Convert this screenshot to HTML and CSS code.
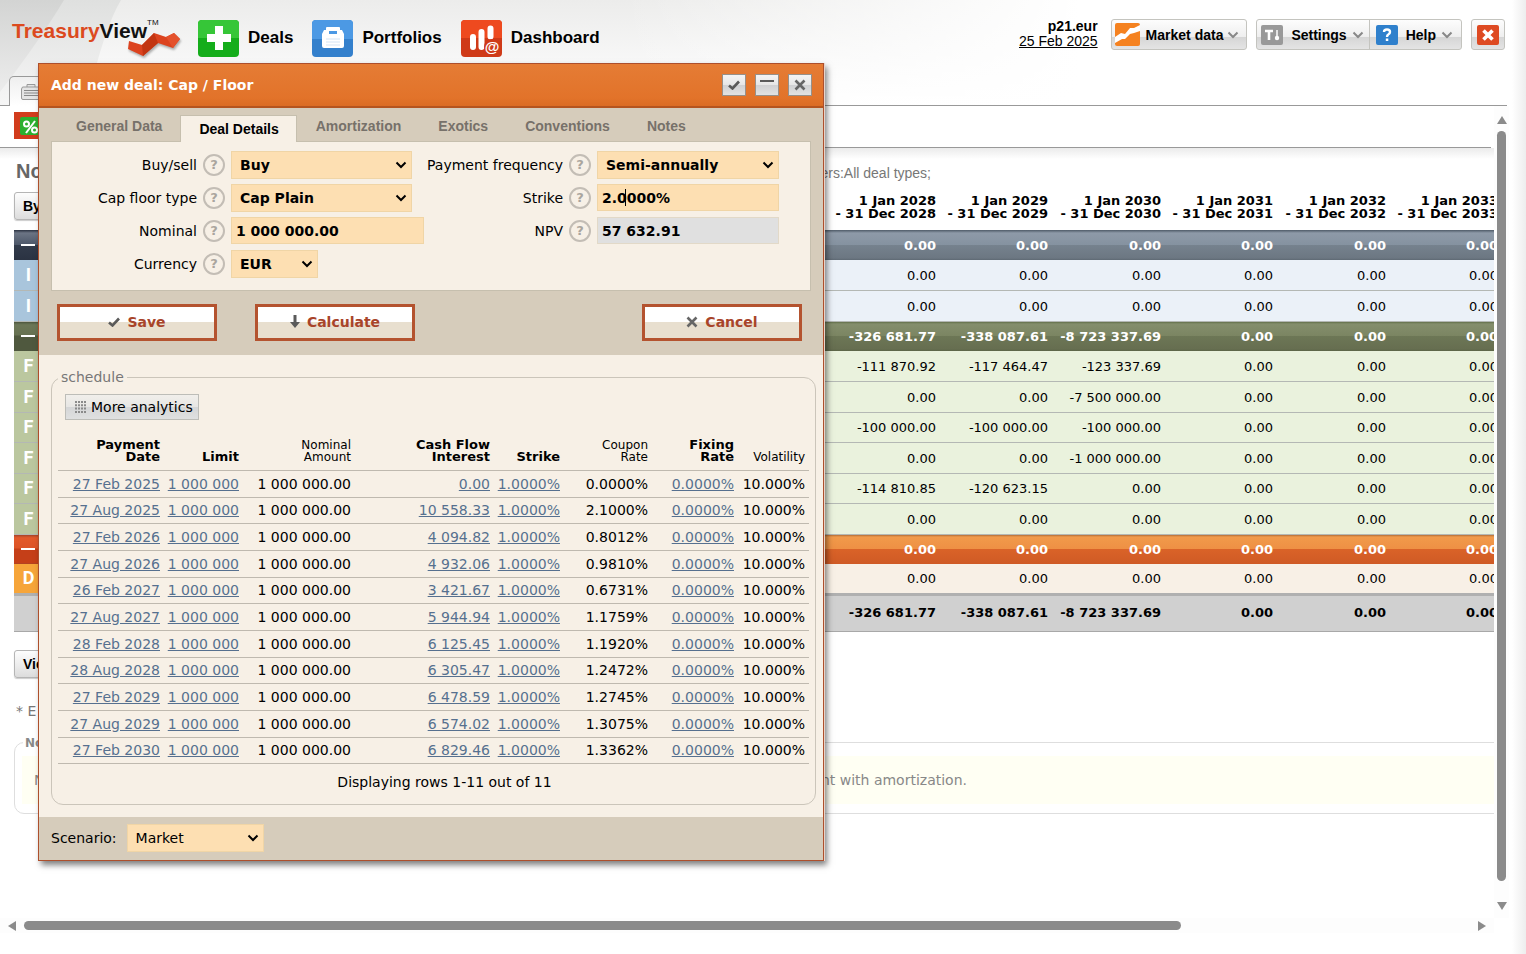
FILE: index.html
```html
<!DOCTYPE html>
<html lang="en">
<head>
<meta charset="utf-8">
<title>TreasuryView</title>
<link rel="stylesheet" href="styles.css">
</head>
<body>
<svg class="defs" aria-hidden="true">
  <symbol id="chev" viewBox="0 0 12 8"><path d="M1.5 1.5 6 6l4.500-4.500" fill="none" stroke="currentColor" stroke-width="2"/></symbol>
  <symbol id="check" viewBox="0 0 12 10"><path d="M1 5.500 4.500 8.500 11 1.500" fill="none" stroke="#5a5a5a" stroke-width="2.600"/></symbol>
  <symbol id="cross" viewBox="0 0 12 12"><path d="M1.500 1.500 10.500 10.500M10.500 1.500 1.500 10.500" fill="none" stroke="#666" stroke-width="2.600"/></symbol>
</svg>

<header class="top">
  <svg class="top-art" width="320" height="106" aria-hidden="true">
    <defs>
      <linearGradient id="ga" x1="0" y1="0" x2="0" y2="1"><stop offset="0" stop-color="#d3d4d3"/><stop offset="1" stop-color="#ececec"/></linearGradient>
      <linearGradient id="gb" x1="0" y1="0" x2="0" y2="1"><stop offset="0" stop-color="#dfe0df"/><stop offset="1" stop-color="#f6f6f6"/></linearGradient>
    </defs>
    <path d="M0 0H121Q104 28 86 106H0Z" fill="url(#gb)"/>
    <path d="M0 0H64Q40 40 0 92Z" fill="url(#ga)"/>
  </svg>
  <a class="logo" href="#"><span class="logo-text"><span class="logo-red">Treasury</span>View</span><span class="logo-tm">TM</span>
    <svg class="logo-mark" width="54" height="26" viewBox="0 0 54 26" aria-hidden="true"><path d="M2 9 15 13 27 1 39 5 47 1 53 7 46 16 31 11 16 24 1 17Z" fill="#dc431f"/><path d="M15 13 27 1 31 11 16 24Z" fill="#c23512"/><path d="M39 5 47 1 53 7 46 16Z" fill="#e4512c"/></svg>
  </a>
  <nav class="main-nav">
    <a href="#"><svg width="41" height="37" viewBox="0 0 41 37"><rect width="41" height="37" rx="4" fill="#15ad1b"/><path d="M4 0H37a4 4 0 0 1 4 4V18H0V4A4 4 0 0 1 4 0Z" fill="#36c638"/><path d="M17 6h8v8h8v8h-8v8h-8v-8H9v-8h8Z" fill="#fff"/></svg>Deals</a>
    <a href="#"><svg width="41" height="37" viewBox="0 0 41 37"><rect width="41" height="37" rx="4" fill="#3480cc"/><path d="M4 0H37a4 4 0 0 1 4 4V19H0V4A4 4 0 0 1 4 0Z" fill="#4c99e4"/><path d="M14 10V8q0-1 1-1h12q1 0 1 1v2h2l2 4v12q0 2-2 2H12q-2 0-2-2V14l2-4Z" fill="#fff"/><path d="M17 11h8v3h-8Z" fill="#4c99e4"/><path d="M14 19h14M14 22h14M14 25h14" stroke="#d5e4f4"/></svg>Portfolios</a>
    <a href="#"><svg width="41" height="37" viewBox="0 0 41 37"><rect width="41" height="37" rx="4" fill="#cf3a18"/><path d="M4 0H37a4 4 0 0 1 4 4V18H0V4A4 4 0 0 1 4 0Z" fill="#ee4a1f"/><path d="M12 17v10M20.500 12v15M29.500 8.500v8" stroke="#fff" stroke-width="6" stroke-linecap="round"/><circle cx="31" cy="27" r="8" fill="#cf3a18"/><text x="31" y="32" class="at-sign" text-anchor="middle">@</text></svg>Dashboard</a>
  </nav>
  <div class="account"><strong>p21.eur</strong><a href="#">25 Feb 2025</a></div>
  <div class="tools">
    <div class="tool-group">
      <button type="button" class="tool tool-market"><svg width="25" height="23" viewBox="0 0 25 23"><rect width="25" height="23" rx="2" fill="#f58220"/><path d="M0 14 6 10l4 1 5-6h4l6-3v6l-6 2-4 1-5 5H7l-7 4Z" fill="#fff"/></svg>Market data<svg class="chev" width="12" height="8"><use href="#chev"/></svg></button>
    </div>
    <div class="tool-group">
      <button type="button" class="tool"><svg width="22" height="20" viewBox="0 0 22 20"><rect width="22" height="20" rx="2" fill="#999"/><path d="M4 6h8M8 6v9" stroke="#fff" stroke-width="2.600"/><path d="M16 5v9" stroke="#fff" stroke-width="1.500"/><circle cx="16" cy="13" r="2.200" fill="#fff"/></svg>Settings<svg class="chev" width="12" height="8"><use href="#chev"/></svg></button>
      <button type="button" class="tool"><svg width="22" height="20" viewBox="0 0 22 20"><rect width="22" height="20" rx="2" fill="#2f80cc"/><path d="M8 7Q8 4.500 11 4.500T14 7Q14 8.500 12.500 9.300 11 10 11 12" fill="none" stroke="#fff" stroke-width="2.400"/><path d="M9.800 13.500h2.500V16H9.800Z" fill="#fff"/></svg>Help<svg class="chev" width="12" height="8"><use href="#chev"/></svg></button>
    </div>
    <div class="tool-group">
      <button type="button" class="tool tool-close" aria-label="Log out"><svg width="22" height="20" viewBox="0 0 22 20"><rect width="22" height="20" rx="2" fill="#de4a22"/><path d="M6.500 5.500l9 9M15.500 5.500l-9 9" stroke="#fff" stroke-width="3.600"/></svg></button>
    </div>
  </div>
</header>

<div class="doc-tabs">
  <button type="button" class="doc-tab" aria-label="Portfolio"><svg width="22" height="18" viewBox="0 0 22 18"><path d="M7 4V1.500h8V4M2.500 4h17l1 2v9q0 1.500-1.500 1.500H3Q1.500 16.500 1.500 15V6Z" fill="#e4e4e4" stroke="#999"/><path d="M4 7.500h14M4 10h14M4 12.500h14" stroke="#888"/></svg></button>
</div>

<main class="workspace">
  <section class="pane">
    <div class="toolbar"><button type="button" class="percent" aria-label="Rates"><svg width="30" height="27" viewBox="0 0 30 27"><rect width="30" height="27" fill="#d23c1c"/><rect x="6" y="5" width="24" height="18" rx="2" fill="#2bb02f"/><g fill="none" stroke="#fff" stroke-width="2"><circle cx="12.500" cy="12" r="2.500"/><circle cx="20.500" cy="18" r="2.500"/><path d="M21 9 12 21"/></g></svg></button></div>
    <div class="view-head"><h1>No</h1><span>Filters:All deal types;</span></div>
    <table class="flows">
      <colgroup><col class="c-icon"><col><col class="c-a"><col class="c-b"><col class="c-a"><col class="c-b"><col class="c-a"><col class="c-b"></colgroup>
      <thead><tr><th colspan="2" class="by"><button type="button" class="soft">By</button></th><th>1 Jan 2028<br>- 31 Dec 2028</th><th>1 Jan 2029<br>- 31 Dec 2029</th><th>1 Jan 2030<br>- 31 Dec 2030</th><th>1 Jan 2031<br>- 31 Dec 2031</th><th>1 Jan 2032<br>- 31 Dec 2032</th><th>1 Jan 2033<br>- 31 Dec 2033</th></tr></thead>
      <tbody class="blue">
        <tr class="group"><td><i class="minus"></i></td><td></td><td>0.00</td><td>0.00</td><td>0.00</td><td>0.00</td><td>0.00</td><td>0.00</td></tr>
        <tr><td>I</td><td></td><td>0.00</td><td>0.00</td><td>0.00</td><td>0.00</td><td>0.00</td><td>0.00</td></tr>
        <tr><td>I</td><td></td><td>0.00</td><td>0.00</td><td>0.00</td><td>0.00</td><td>0.00</td><td>0.00</td></tr>
      </tbody>
      <tbody class="green">
        <tr class="group"><td><i class="minus"></i></td><td></td><td>-326 681.77</td><td>-338 087.61</td><td>-8 723 337.69</td><td>0.00</td><td>0.00</td><td>0.00</td></tr>
        <tr><td>F</td><td></td><td>-111 870.92</td><td>-117 464.47</td><td>-123 337.69</td><td>0.00</td><td>0.00</td><td>0.00</td></tr>
        <tr><td>F</td><td></td><td>0.00</td><td>0.00</td><td>-7 500 000.00</td><td>0.00</td><td>0.00</td><td>0.00</td></tr>
        <tr><td>F</td><td></td><td>-100 000.00</td><td>-100 000.00</td><td>-100 000.00</td><td>0.00</td><td>0.00</td><td>0.00</td></tr>
        <tr><td>F</td><td></td><td>0.00</td><td>0.00</td><td>-1 000 000.00</td><td>0.00</td><td>0.00</td><td>0.00</td></tr>
        <tr><td>F</td><td></td><td>-114 810.85</td><td>-120 623.15</td><td>0.00</td><td>0.00</td><td>0.00</td><td>0.00</td></tr>
        <tr><td>F</td><td></td><td>0.00</td><td>0.00</td><td>0.00</td><td>0.00</td><td>0.00</td><td>0.00</td></tr>
      </tbody>
      <tbody class="orange">
        <tr class="group"><td><i class="minus"></i></td><td></td><td>0.00</td><td>0.00</td><td>0.00</td><td>0.00</td><td>0.00</td><td>0.00</td></tr>
        <tr><td>D</td><td></td><td>0.00</td><td>0.00</td><td>0.00</td><td>0.00</td><td>0.00</td><td>0.00</td></tr>
      </tbody>
      <tfoot><tr><td></td><td></td><td>-326 681.77</td><td>-338 087.61</td><td>-8 723 337.69</td><td>0.00</td><td>0.00</td><td>0.00</td></tr></tfoot>
    </table>
    <button type="button" class="soft view-btn">View</button>
    <p class="remark">* E</p>
    <fieldset class="notes"><legend>No</legend><div class="notes-body"><p><span>N</span><span>nt with amortization.</span></p></div></fieldset>
  </section>
  <div class="vbar"><i class="arrow up"></i><i class="thumb"></i><i class="arrow down"></i></div>
  <div class="hbar"><i class="arrow left"></i><span class="track"><i class="thumb"></i></span><i class="arrow right"></i></div>
</main>

<section class="dialog" role="dialog" aria-labelledby="dlg-title">
  <div class="dlg-title">
    <h2 id="dlg-title">Add new deal: Cap / Floor</h2>
    <button type="button" aria-label="Apply"><svg width="12" height="10"><use href="#check"/></svg></button>
    <button type="button" aria-label="Minimize" class="min"><svg width="14" height="12" viewBox="0 0 14 12"><path d="M0 2h14" stroke="#5a5a5a" stroke-width="2"/></svg></button>
    <button type="button" aria-label="Close"><svg width="12" height="12"><use href="#cross"/></svg></button>
  </div>
  <div class="dlg-form">
    <div class="tabs" role="tablist">
      <button type="button" role="tab">General Data</button><button type="button" role="tab" class="on" aria-selected="true">Deal Details</button><button type="button" role="tab">Amortization</button><button type="button" role="tab">Exotics</button><button type="button" role="tab">Conventions</button><button type="button" role="tab">Notes</button>
    </div>
    <form class="panel">
      <div class="fields left">
        <label for="side">Buy/sell</label><button type="button" class="help">?</button><span class="sel w-mid"><select id="side"><option>Buy</option></select><svg width="12" height="8"><use href="#chev"/></svg></span>
        <label for="type">Cap floor type</label><button type="button" class="help">?</button><span class="sel w-mid"><select id="type"><option>Cap Plain</option></select><svg width="12" height="8"><use href="#chev"/></svg></span>
        <label for="nominal">Nominal</label><button type="button" class="help">?</button><input id="nominal" type="text" value="1 000 000.00">
        <label for="ccy">Currency</label><button type="button" class="help">?</button><span class="sel w-small"><select id="ccy"><option>EUR</option></select><svg width="12" height="8"><use href="#chev"/></svg></span>
      </div>
      <div class="fields right">
        <label for="freq">Payment frequency</label><button type="button" class="help">?</button><span class="sel"><select id="freq"><option>Semi-annually</option></select><svg width="12" height="8"><use href="#chev"/></svg></span>
        <label for="strike">Strike</label><button type="button" class="help">?</button><span class="edit"><input id="strike" type="text" value="2.0000%"><i class="caret"></i></span>
        <label for="npv">NPV</label><button type="button" class="help">?</button><input id="npv" type="text" value="57 632.91" readonly>
      </div>
    </form>
    <div class="actions">
      <button type="button"><svg width="12" height="10"><use href="#check"/></svg>Save</button>
      <button type="button"><svg width="10" height="13" viewBox="0 0 10 13"><path d="M3.500 0h3v7H10L5 13 0 7h3.500Z" fill="#5a5a5a"/></svg>Calculate</button>
      <button type="button" class="cancel"><svg width="12" height="12"><use href="#cross"/></svg>Cancel</button>
    </div>
  </div>
  <div class="dlg-content">
    <fieldset class="schedule">
      <legend>schedule</legend>
      <button type="button" class="more"><svg width="11" height="12" viewBox="0 0 11 12"><path d="M0 1h11M0 4.300h11M0 7.600h11M0 11h11" stroke="#8a8a8a" stroke-width="2" stroke-dasharray="2 1"/></svg>More analytics</button>
      <table>
        <colgroup><col class="k1"><col class="k2"><col class="k3"><col class="k4"><col class="k5"><col class="k6"><col class="k7"><col></colgroup>
        <thead><tr><th>Payment<br>Date</th><th>Limit</th><th class="thin">Nominal<br>Amount</th><th>Cash Flow<br>Interest</th><th>Strike</th><th class="thin">Coupon<br>Rate</th><th>Fixing<br>Rate</th><th class="thin">Volatility</th></tr></thead>
        <tbody>
          <tr><td><a href="#">27 Feb 2025</a></td><td><a href="#">1 000 000</a></td><td>1 000 000.00</td><td><a href="#">0.00</a></td><td><a href="#">1.0000%</a></td><td>0.0000%</td><td><a href="#">0.0000%</a></td><td>10.000%</td></tr>
          <tr><td><a href="#">27 Aug 2025</a></td><td><a href="#">1 000 000</a></td><td>1 000 000.00</td><td><a href="#">10 558.33</a></td><td><a href="#">1.0000%</a></td><td>2.1000%</td><td><a href="#">0.0000%</a></td><td>10.000%</td></tr>
          <tr><td><a href="#">27 Feb 2026</a></td><td><a href="#">1 000 000</a></td><td>1 000 000.00</td><td><a href="#">4 094.82</a></td><td><a href="#">1.0000%</a></td><td>0.8012%</td><td><a href="#">0.0000%</a></td><td>10.000%</td></tr>
          <tr><td><a href="#">27 Aug 2026</a></td><td><a href="#">1 000 000</a></td><td>1 000 000.00</td><td><a href="#">4 932.06</a></td><td><a href="#">1.0000%</a></td><td>0.9810%</td><td><a href="#">0.0000%</a></td><td>10.000%</td></tr>
          <tr><td><a href="#">26 Feb 2027</a></td><td><a href="#">1 000 000</a></td><td>1 000 000.00</td><td><a href="#">3 421.67</a></td><td><a href="#">1.0000%</a></td><td>0.6731%</td><td><a href="#">0.0000%</a></td><td>10.000%</td></tr>
          <tr><td><a href="#">27 Aug 2027</a></td><td><a href="#">1 000 000</a></td><td>1 000 000.00</td><td><a href="#">5 944.94</a></td><td><a href="#">1.0000%</a></td><td>1.1759%</td><td><a href="#">0.0000%</a></td><td>10.000%</td></tr>
          <tr><td><a href="#">28 Feb 2028</a></td><td><a href="#">1 000 000</a></td><td>1 000 000.00</td><td><a href="#">6 125.45</a></td><td><a href="#">1.0000%</a></td><td>1.1920%</td><td><a href="#">0.0000%</a></td><td>10.000%</td></tr>
          <tr><td><a href="#">28 Aug 2028</a></td><td><a href="#">1 000 000</a></td><td>1 000 000.00</td><td><a href="#">6 305.47</a></td><td><a href="#">1.0000%</a></td><td>1.2472%</td><td><a href="#">0.0000%</a></td><td>10.000%</td></tr>
          <tr><td><a href="#">27 Feb 2029</a></td><td><a href="#">1 000 000</a></td><td>1 000 000.00</td><td><a href="#">6 478.59</a></td><td><a href="#">1.0000%</a></td><td>1.2745%</td><td><a href="#">0.0000%</a></td><td>10.000%</td></tr>
          <tr><td><a href="#">27 Aug 2029</a></td><td><a href="#">1 000 000</a></td><td>1 000 000.00</td><td><a href="#">6 574.02</a></td><td><a href="#">1.0000%</a></td><td>1.3075%</td><td><a href="#">0.0000%</a></td><td>10.000%</td></tr>
          <tr><td><a href="#">27 Feb 2030</a></td><td><a href="#">1 000 000</a></td><td>1 000 000.00</td><td><a href="#">6 829.46</a></td><td><a href="#">1.0000%</a></td><td>1.3362%</td><td><a href="#">0.0000%</a></td><td>10.000%</td></tr>
        </tbody>
      </table>
      <p class="count">Displaying rows 1-11 out of 11</p>
    </fieldset>
  </div>
  <div class="dlg-foot"><label for="scenario">Scenario:</label><span class="sel"><select id="scenario"><option>Market</option></select><svg width="12" height="8"><use href="#chev"/></svg></span></div>
</section>
</body>
</html>
```
FILE: styles.css
```css
* { box-sizing: border-box; }
body {
  margin: 0;
  min-height: 100vh;
  display: flex;
  flex-direction: column;
  position: relative;
  z-index: 0;
  overflow-x: hidden;
  font: 14px/18px "DejaVu Sans", sans-serif;
  color: #000;
  background:
    linear-gradient(to left, #ededed, rgba(255,255,255,0) 14px),
    linear-gradient(to right, rgba(255,255,255,0) 620px, #fff 1080px),
    linear-gradient(#ececeb, #fafafa 76px, #fff 106px);
}
button, input, select { font: inherit; color: inherit; margin: 0; padding: 0; cursor: pointer; }
h1, h2, p { margin: 0; }
svg { display: block; flex: none; }
.defs { position: absolute; width: 0; height: 0; }

/* top bar */
.top {
  display: flex;
  align-items: center;
  height: 76px;
  padding: 0 21px 0 12px;
  position: relative;
  font-family: "Liberation Sans", sans-serif;
}
.top-art { position: absolute; left: 0; top: 0; z-index: -1; }
.logo { width: 186px; height: 38px; position: relative; display: flex; color: #111; text-decoration: none; }
.logo-text { font: bold 21px/24px "Liberation Sans", sans-serif; }
.logo-red { color: #dc4a1e; }
.logo-tm { font-size: 8px; line-height: 8px; }
.logo-mark { position: absolute; left: 115px; top: 13px; filter: drop-shadow(1px 2px 1px rgba(0,0,0,.3)); }
.main-nav { display: flex; gap: 19px; }
.main-nav a { display: flex; align-items: center; gap: 9px; font-size: 17px; font-weight: bold; color: #000; text-decoration: none; }
.at-sign { font: bold 15px "Liberation Sans", sans-serif; fill: #fff; }
.account { margin-left: auto; text-align: right; line-height: 15px; padding-bottom: 8px; display: flex; flex-direction: column; }
.account a { color: #000; }
.tools { display: flex; gap: 9px; margin-left: 13px; padding-bottom: 7px; }
.tool-group { display: flex; height: 31px; border: 1px solid #c4c4bf; border-radius: 3px; background: linear-gradient(#fdfdfd, #eee 60%, #d6d6d6 60%, #e4e4e4); }
.tool { display: flex; align-items: center; gap: 8px; border: 0; padding: 0 5px 0 4px; background: none; font-weight: bold; }
.tool + .tool { border-left: 1px solid #c4c4bf; padding: 0 8px 0 6px; }
.tool-market { gap: 6px; padding: 0 7px 0 3px; }
.tool-close { padding: 0 5px; }
.tool .chev { color: #888; margin-left: -3px; }
.tool-market .chev { margin-left: -2px; }

/* document tabs */
.doc-tabs { height: 30px; margin-right: 19px; padding-left: 9px; border-bottom: 1px solid #999; }
.doc-tab { width: 60px; height: 30px; padding: 0 10px; border: 1px solid #999; border-bottom: 0; border-radius: 5px 0 0 0; background: linear-gradient(#efefef, #fff); }

/* workspace */
.workspace {
  flex: 1;
  display: grid;
  grid-template: minmax(0, 1fr) 15px / minmax(0, 1fr) 15px;
  margin-right: 17px;
  padding-bottom: 21px;
}
.pane { overflow: hidden; padding-bottom: 20px; background: #fff; }
.toolbar { height: 42px; padding: 6px 14px 0; border-bottom: 1px solid #999; margin-right: 3px; }
.percent { border: 0; background: none; display: block; }
.view-head {
  display: flex;
  justify-content: space-between;
  align-items: baseline;
  width: 931px;
  height: 41px;
  padding: 11px 0 0 16px;
  color: #777;
  font-family: "Liberation Sans", sans-serif;
}
.view-head::before { content: ""; position: absolute; left: 0; right: 32px; top: 148px; height: 11px; background: linear-gradient(#ebebeb, #fff); }
.view-head h1 { font-size: 20px; line-height: 24px; color: #666; position: relative; }
.flows { width: 1489px; margin-left: 14px; table-layout: fixed; border-collapse: collapse; font-size: 13px; line-height: 18px; }
.c-icon { width: 29px; }
.c-a { width: 113px; }
.c-b { width: 112px; }
.flows th { height: 40px; padding: 5px 5px 10px 0; text-align: right; line-height: 13px; vertical-align: top; white-space: nowrap; }
.flows th.by { padding: 3px 0 0; text-align: left; }
.soft { height: 28px; padding: 0 8px; border: 1px solid #b5b5b5; border-radius: 3px; background: linear-gradient(#fdfdfd, #ececec 55%, #dcdcdc); font: bold 14px/18px "Liberation Sans", sans-serif; box-shadow: 0 1px 1px #ccc; }
.flows td { height: 30px; padding: 2px 5px 0 0; text-align: right; white-space: nowrap; }
.flows tbody tr:nth-child(2n+3) td { height: 31px; }
.flows tbody tr + tr { border-bottom: 1px solid #b4b8b4; }
.flows td:first-child { padding: 0; text-align: center; font: bold 18px/20px Roboto, sans-serif; color: #fff; }
.flows .group { color: #fff; font-weight: bold; }
.minus { display: block; width: 14px; height: 2px; margin: 0 0 0 7px; background: #fff; }
.blue .group { background: linear-gradient(#4f5b68 0, #8e9aa8 3px, #8592a0 50%, #76828e 50%, #6c7782 28px, #5e6973); }
.blue .group td:first-child { background: linear-gradient(#2a3140 0, #6b7484 3px, #4c5668 50%, #323b4b 50%, #2b3342); }
.blue tr + tr { background: #ebf1f8; }
.blue tr + tr td:first-child { background: #a9c5dc; }
.green .group { background: linear-gradient(#52613a 0, #848e6c 3px, #7b8562 50%, #6d7756 50%, #666e50 28px, #5c6547); }
.green .group td:first-child { background: linear-gradient(#454f37 0, #6b7657 3px, #667050 50%, #4f583e 50%); }
.green tr + tr { background: #eaf2dd; }
.green tr + tr td:first-child { background: #bbc79f; }
.orange .group { background: linear-gradient(#94582e 0, #f19a4a 3px, #ee9044 50%, #da6328 50%, #cf5a25); }
.orange .group td:first-child { background: linear-gradient(#94402a 0, #e2592a 3px, #dc5426 50%, #c53f18 50%); }
.orange tr + tr { background: #f8f0e6; }
.orange tr + tr td:first-child { background: #f6a53a; }
.flows tfoot td { height: 37px; padding-top: 0; font-weight: bold; border-top: 3px solid #b0b0b0; border-bottom: 1px solid #a8a8a8; background: #d0d0d0; }
.view-btn { display: block; margin: 18px 0 0 14px; }
.remark { margin: 24px 0 0 16px; color: #777; }
.notes { margin: 13px -10px 0 14px; padding: 3px 7px 9px; border: 1px solid #dedede; border-radius: 10px; color: #888; }
.notes legend { margin-left: 1px; padding: 0 2px; font-size: 12px; font-weight: bold; line-height: 20px; }
.notes-body { padding: 15px 12px; background: #fffff3; }
.notes p { display: flex; justify-content: space-between; width: 933px; }

/* scroll bars */
.vbar { display: flex; flex-direction: column; align-items: center; padding: 10px 0 8px; background: #fdfdfd; }
.vbar .thumb { flex: 1; width: 9px; margin: 7px 0 21px; }
.hbar { display: flex; align-items: center; gap: 8px; padding: 0 8px 0 8px; background: #fdfdfd; }
.hbar .track { flex: 1; }
.hbar .thumb { display: block; width: 80%; height: 9px; }
.thumb { border-radius: 5px; background: #8b8b8b; }
.arrow { border: 5px solid transparent; flex: none; }
.up { border-width: 0 5px 8px; border-bottom-color: #8b8b8b; }
.down { border-width: 8px 5px 0; border-top-color: #8b8b8b; }
i.arrow.left { border-width: 5px 8px 5px 0; border-right-color: #8b8b8b; }
i.arrow.right { border-width: 5px 0 5px 8px; border-left-color: #8b8b8b; }

/* dialog window */
.dialog { position: absolute; left: 38px; top: 63px; width: 786px; border: 1px solid #ad4f2c; background: #f7f0e6; box-shadow: 1px 0 0 #e9d3c8, 3px 4px 6px rgba(0,0,0,.5); }
.dlg-title { display: flex; align-items: center; height: 44px; padding: 0 11px 0 12px; border-bottom: 2px solid #b5541f; background: linear-gradient(#e57c35, #e2732a 80%, #db6c24); color: #fff; }
.dlg-title h2 { flex: 1; font-size: 14px; line-height: 18px; }
.dlg-title button { display: grid; place-items: center; width: 24px; height: 22px; border: 1px solid #96908a; background: linear-gradient(#f4f4f4, #e6e6e6 50%, #cfd0d2 50%, #e2e2e2); }
.dlg-title button + button { margin-left: 9px; }
.dlg-form { padding: 7px 12px 14px; background: #d6ccbb; }
.tabs { display: flex; align-items: flex-end; padding-left: 6px; font-family: "Liberation Sans", sans-serif; }
.tabs button { height: 26px; padding: 0 18px 4px 19px; border: 0; background: none; font-weight: bold; color: #77716a; white-space: nowrap; }
.tabs .on { height: 27px; padding: 0 17px 0 18px; margin-bottom: -1px; border: 1px solid #c6bfae; border-bottom: 0; background: #f7f0e6; color: #000; }
.panel { display: flex; min-height: 150px; padding: 6px 0 8px; border: 1px solid #c6bfae; background: #f7f0e6; }
.fields { display: grid; grid-auto-rows: 33px; align-content: start; align-items: center; column-gap: 6px; }
.left { grid-template-columns: 145px 22px 193px; }
.right { grid-template-columns: 139px 22px 182px; }
.fields label { text-align: right; white-space: nowrap; }
.fields input, .fields select { font-weight: bold; }
.help { width: 22px; height: 22px; border: 2px solid #c3bdb5; border-radius: 50%; background: none; color: #aaa59e; font-size: 13px; font-weight: bold; line-height: 16px; }
.panel input { width: 100%; height: 27px; padding: 0 4px; border: 1px solid #f0d5a6; background: #fddfb2; }
.panel input[readonly] { background: #e0e0e0; border-color: #e2d9c8; }
.sel { display: grid; align-items: center; }
.sel > * { grid-area: 1 / 1; }
.sel select { appearance: none; width: 100%; height: 28px; padding: 0 8px; border: 1px solid #f0d5a6; border-radius: 0; background: #fddfb2; }
.sel svg { justify-self: end; margin-right: 5px; pointer-events: none; }
.w-mid { width: 181px; }
.w-small { width: 87px; }
.edit { position: relative; }
.caret { position: absolute; left: 28px; top: 5px; width: 1px; height: 17px; background: #000; }
.actions { display: flex; gap: 38px; padding: 13px 9px 0 6px; }
.actions button { display: flex; align-items: center; justify-content: center; gap: 7px; width: 160px; height: 37px; padding-bottom: 2px; border: 3px solid #b4532f; background: linear-gradient(#fff 50%, #e8dfcf 50%); color: #a8442a; font-weight: bold; }
.actions .cancel { margin-left: auto; }
.dlg-content { padding: 13px 7px 12px 12px; }
.schedule { margin: 0; padding: 8px 6px 13px; border: 1px solid #cbc5ba; border-radius: 12px; min-width: 0; }
.schedule legend { margin-left: 0; padding: 0 3px; line-height: 18px; color: #777; }
.more { display: flex; align-items: center; gap: 5px; height: 26px; margin-left: 7px; padding: 0 5px 0 9px; border: 1px solid #bdbdb8; background: linear-gradient(#f1efeb, #e7e6e4 50%, #d5d6d7 50%, #dfe0e0); }
.schedule table { width: 100%; table-layout: fixed; border-collapse: collapse; }
.k1 { width: 106px; }
.k2 { width: 79px; }
.k3 { width: 112px; }
.k4 { width: 139px; }
.k5 { width: 70px; }
.k6 { width: 88px; }
.k7 { width: 86px; }
.schedule th { height: 50px; padding: 0 4px 7px 0; vertical-align: bottom; text-align: right; font-size: 13px; line-height: 12px; white-space: nowrap; }
.schedule .thin { font-weight: normal; font-size: 12px; }
.schedule tr { border-bottom: 1px solid #bfb9af; }
.schedule td { height: 27px; padding: 0 4px 0 0; text-align: right; white-space: nowrap; }
.schedule tr:nth-child(3n+2) td { height: 26px; }
.schedule td a { color: #56708f; }
.count { padding: 9px 0 0 22px; text-align: center; }
.dlg-foot { display: flex; align-items: center; gap: 10px; height: 43px; padding: 0 12px; background: #d6ccbb; }
.dlg-foot .sel { width: 137px; }
```
